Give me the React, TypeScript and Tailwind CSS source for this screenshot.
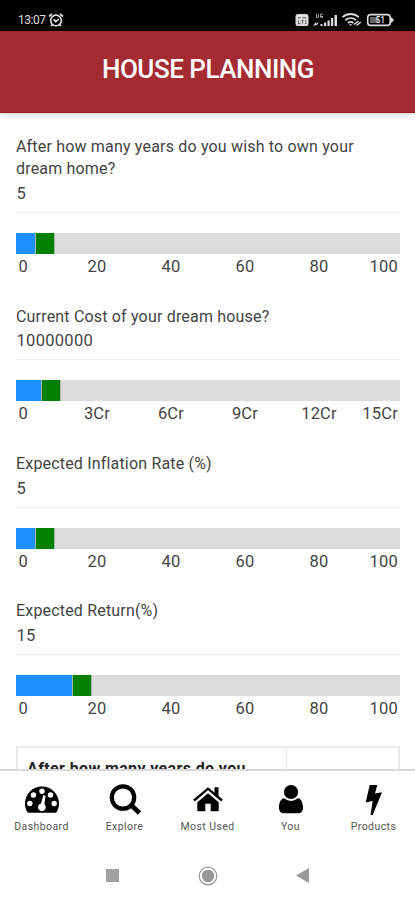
import React, { useState } from 'react';

interface SliderFieldProps {
  label: string;
  initialValue: number;
  max: number;
  ticks: string[];
}

const HANDLE_WIDTH = 20;
const TRACK_WIDTH = 384;

const SliderField: React.FC<SliderFieldProps> = ({ label, initialValue, max, ticks }) => {
  const [value] = useState(initialValue);
  const filled = (value / max) * (TRACK_WIDTH - HANDLE_WIDTH) + 1;

  return (
    <div className="pb-[26px]">
      <p className="pt-[0.900px] pr-8 text-[16px] leading-[22.500px] tracking-[0.180px] text-[#444]">{label}</p>
      <div className="h-[32px] border-b border-[#eeeeee] pl-[0.500px] text-[16.500px] leading-[25px] tracking-[0.300px] text-[#444]">
        {value}
      </div>
      <div className="mt-5 flex h-[21px] bg-[#dcdcdc]">
        <div className="bg-[#1e90ff]" style={{ width: filled }} />
        <div className="w-5 border-x border-[#a9b8a9] bg-[#008000]" />
      </div>
      <div className="flex h-[25px] text-[16.500px] leading-[25px] tracking-[0.200px] text-[#444]">
        {ticks.map((tick, i) => (
          <span
            key={tick}
            className={
              i === 0
                ? 'w-11 pl-[2.500px]'
                : i === ticks.length - 1
                  ? 'flex w-11 justify-end pr-[2px]'
                  : 'w-[74px] text-center'
            }
          >
            {tick}
          </span>
        ))}
      </div>
    </div>
  );
};

const StatusBar = () => (
  <div className="flex h-[31px] shrink-0 items-center bg-black pt-2 pl-[18px] text-[#ddd]">
    <span className="w-[29px] text-[12px] leading-none tracking-[-0.5px]">13:07</span>
    <svg width="17" height="16" viewBox="0 0 17 16" fill="none" stroke="currentColor" strokeWidth="1.7">
      <circle cx="9" cy="8.500" r="5.300" />
      <path d="M2 4.500 5 2M16 4.500 13 2M5.300 12.600 4 14.200M12.700 12.600l1.300 1.600M6.500 7.300l2.300 2.300 3-2.400" />
    </svg>
    {/* VoLTE */}
    <svg className="ml-[231px]" width="14" height="14" viewBox="0 0 14 14">
      <rect x="0.5" y="1" width="13" height="12" rx="2.5" fill="#ddd" />
      <path d="M3 4.800h3M7.500 4.800H11M3.500 7.500v3.200h2M6.500 7.500h2M7.500 7.500v3.200M10 7.800h1.500M10 10.500h1.500M10 9.100h1.200" stroke="#444" strokeWidth="0.9" fill="none" />
    </svg>
    {/* Signal */}
    <svg className="ml-[3px]" width="27" height="14" viewBox="0 0 27 14" fill="currentColor">
      <path d="M1 13 4 9v1.500L7 9 4.500 13v-1.200z" />
      <path d="M4 .8v4h3v-4H6v3H5v-3zM8 .8v4h3V3H9V1.800h2v-1z" opacity="0.7" />
      <path d="M8.500 11h2v2h-2zM12 9.500h2.200V13H12zM15.500 7.500h2.200V13h-2.200zM19 5h2.200v8H19zM22.500 2h2.500v11h-2.500z" />
    </svg>
    {/* Wifi */}
    <svg className="ml-[2px]" width="21" height="15" viewBox="0 0 21 15" fill="none" stroke="currentColor" strokeWidth="1.8">
      <path d="M1.500 5.200C6.300.9 13 .9 17.800 5.200M4.300 8.200c3.300-2.900 7.500-2.900 10.700 0M7 11c1.800-1.500 3.600-1.500 5.300 0" />
      <path d="m8.200 12.200 1.500 1.800 1.500-1.800z" fill="currentColor" stroke="none" />
      <path d="m13 12.500 4.500-3.400M15.500 13.500l4.300-3.400" strokeWidth="1.4" />
    </svg>
    {/* Battery */}
    <svg className="ml-[4px]" width="28" height="14" viewBox="0 0 28 14">
      <rect x="1.700" y="1.600" width="22.500" height="10.800" rx="3" fill="none" stroke="#ddd" strokeWidth="1.600" />
      <path d="M25 4.200 27.500 6.200v1.800L25 10z" fill="#ddd" />
      <rect x="4" y="4" width="9" height="6" fill="#666" />
      <text x="9.500" y="10" fontSize="8.500" fontWeight="500" fill="#ddd" fontFamily="Roboto">51</text>
    </svg>
  </div>
);

const navItems = [
  {
    label: 'Dashboard',
    icon: (
      <svg width="36" height="32" viewBox="0 0 36 32">
        <path d="M18 2.500A17 17 0 0 0 1 19.500c0 3.300.9 6.200 2.300 8.500.4.5.8.7 1.500.7h26.400c.7 0 1.100-.2 1.500-.7C34.100 25.700 35 22.800 35 19.500A17 17 0 0 0 18 2.500z" />
        <g fill="#fff">
          <circle cx="18" cy="7.200" r="2.700" />
          <circle cx="9.500" cy="11" r="2.700" />
          <circle cx="26.500" cy="11" r="2.700" />
          <circle cx="5.800" cy="19.500" r="2.700" />
          <circle cx="30.200" cy="19.500" r="2.700" />
          <path d="m19.200 11.200 2.400.6-1.200 8.400a3.900 3.900 0 1 1-3.400-.8z" />
        </g>
      </svg>
    ),
  },
  {
    label: 'Explore',
    icon: (
      <svg width="34" height="32" viewBox="0 0 34 32" fill="none" stroke="#000">
        <circle cx="15" cy="13.500" r="11.200" strokeWidth="4.200" />
        <path d="m23 21 8.500 8" strokeWidth="4.800" />
      </svg>
    ),
  },
  {
    label: 'Most Used',
    icon: (
      <svg width="32" height="32" viewBox="0 0 32 32">
        <path d="M16 9.200 5.300 18.200V26.300q0 1 1 1h7v-7.500h5.400v7.500h7q1 0 1-1V18.200z" />
        <path d="M2 16.500 16 4.700 30 16.500" fill="none" stroke="#000" strokeWidth="2.400" />
        <path d="M22.500 3.300h4V13l-4-3.400z" />
      </svg>
    ),
  },
  {
    label: 'You',
    icon: (
      <svg width="28" height="32" viewBox="0 0 28 32">
        <circle cx="14" cy="8" r="7.100" />
        <path d="M7.200 14.300C3.500 14.900 2 18.700 2 23.700c0 3.600 2 5.600 5 5.600h14c3 0 5-2 5-5.600 0-5-1.500-8.800-5.200-9.400a10 10 0 0 1-13.600 0z" />
      </svg>
    ),
  },
  {
    label: 'Products',
    icon: (
      <svg width="20" height="32" viewBox="0 0 20 32">
        <path d="M5.700 1h7.600L11 9.500l7-1.200L8.700 31H6.500l2.200-14-7 1.600z" />
      </svg>
    ),
  },
];

const percentTicks = ['0', '20', '40', '60', '80', '100'];

export default function App() {
  return (
    <div className="flex h-[900px] w-[415px] flex-col overflow-hidden bg-white font-['Roboto',sans-serif]">
      <StatusBar />
      <header className="z-10 flex h-[82px] shrink-0 items-center justify-center border-b border-[#981d22] bg-[#a52b32] pb-[4px] shadow-[0_1px_4px_rgba(0,0,0,0.2)]">
        <h1 className="pl-px text-[26px] font-medium tracking-[-0.480px] text-white">HOUSE PLANNING</h1>
      </header>

      <main className="min-h-0 flex-1 overflow-hidden pt-[21.900px] pr-[15px] pl-4">
        <SliderField
          label="After how many years do you wish to own your dream home?"
          initialValue={5}
          max={100}
          ticks={percentTicks}
        />
        <SliderField
          label="Current Cost of your dream house?"
          initialValue={10000000}
          max={150000000}
          ticks={['0', '3Cr', '6Cr', '9Cr', '12Cr', '15Cr']}
        />
        <SliderField label="Expected Inflation Rate (%)" initialValue={5} max={100} ticks={percentTicks} />
        <SliderField label="Expected Return(%)" initialValue={15} max={100} ticks={percentTicks} />

        {/* Summary table */}
        <div className="-mt-[0.600px] flex h-[23px] overflow-hidden border-x-2 border-t-2 border-[#ebebeb]">
          <div className="w-[269px] border-r border-[#e8e8e8] pt-[10px] pl-[9px] text-[16px] leading-[22px] font-bold tracking-[0.380px] whitespace-nowrap text-[#222]">
            After how many years do you
          </div>
          <div className="flex-1" />
        </div>
      </main>

      <nav className="grid h-[82px] shrink-0 grid-cols-5 border-t-2 border-[#d8d8d8] bg-white">
        {navItems.map((item) => (
          <button key={item.label} className="flex flex-col items-center pt-[13px]">
            {item.icon}
            <span className="text-[10.500px] leading-[22px] tracking-[0.430px] whitespace-nowrap text-[#555]">{item.label}</span>
          </button>
        ))}
      </nav>

      {/* Android system buttons */}
      <div className="flex h-[49px] shrink-0 items-center justify-between bg-white pr-[106px] pl-[106px]">
        <div className="size-[13px] bg-[#a0a0a0]" />
        <svg width="20" height="20" viewBox="0 0 20 20">
          <circle cx="10" cy="10" r="8.800" fill="none" stroke="#999" strokeWidth="1.200" />
          <circle cx="10" cy="10" r="6.200" fill="#999" />
        </svg>
        <svg width="13" height="15" viewBox="0 0 13 15">
          <path d="M13 0v15L0 7.500z" fill="#999" />
        </svg>
      </div>
    </div>
  );
}
